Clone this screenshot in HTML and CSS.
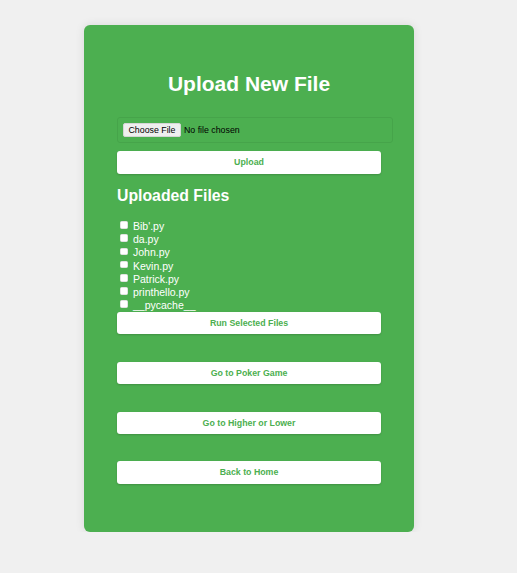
FILE: index.html
```html
<!DOCTYPE html>
<html lang="en">
<head>
<meta charset="utf-8">
<title>Upload New File</title>
<link rel="stylesheet" href="styles.css">
</head>
<body>
<div class="page">
  <div class="card">
    <h1 class="title">Upload New File</h1>
    <form class="upload-form">
      <input type="file" class="file-input">
      <button type="button" class="btn">Upload</button>
    </form>
    <h2 class="section-title">Uploaded Files</h2>
    <form class="run-form">
      <ul class="file-list">
        <li class="file-item"><input type="checkbox" class="check"><span>Bib'.py</span></li>
        <li class="file-item"><input type="checkbox" class="check"><span>da.py</span></li>
        <li class="file-item"><input type="checkbox" class="check"><span>John.py</span></li>
        <li class="file-item"><input type="checkbox" class="check"><span>Kevin.py</span></li>
        <li class="file-item"><input type="checkbox" class="check"><span>Patrick.py</span></li>
        <li class="file-item"><input type="checkbox" class="check"><span>printhello.py</span></li>
        <li class="file-item"><input type="checkbox" class="check"><span>__pycache__</span></li>
      </ul>
      <button type="button" class="btn">Run Selected Files</button>
    </form>
    <a href="#" class="btn link-btn">Go to Poker Game</a>
    <a href="#" class="btn link-btn">Go to Higher or Lower</a>
    <a href="#" class="btn link-btn">Back to Home</a>
  </div>
</div>
</body>
</html>
```
FILE: styles.css
```css
html, body {
  margin: 0;
  padding: 0;
  background: #f0f0f0;
  font-family: "Liberation Sans", Arial, sans-serif;
}

.page {
  padding: 25px 0 0 84px;
}

.card {
  width: 264px;
  padding: 33px 33px 47.5px;
  background: #4caf50;
  border-radius: 6px;
  box-shadow: 0 0 10px rgba(0, 0, 0, 0.1);
  color: #ffffff;
}

.title {
  margin: 14px 0 21px;
  font-size: 21px;
  line-height: 24px;
  font-weight: bold;
  text-align: center;
}

.upload-form {
  margin: 0;
}

.file-input {
  display: block;
  width: 264px;
  height: 14px;
  padding: 5px;
  margin: 0 0 8px;
  border: 1px solid #46a44a;
  border-radius: 3px;
  font-family: "Liberation Sans", Arial, sans-serif;
  font-size: 8.8px;
  line-height: 14px;
  color: #000;
}

.file-input::file-selector-button {
  height: 14px;
  padding: 0 4.5px;
  margin: 0 3px 0 0;
  border: 1px solid #d6d6d6;
  border-radius: 2px;
  background: #efefef;
  font-family: "Liberation Sans", Arial, sans-serif;
  font-size: 8.8px;
  color: #000;
}

.btn {
  display: block;
  box-sizing: border-box;
  width: 100%;
  height: 22.7px;
  margin: 0;
  padding: 0;
  border: none;
  border-radius: 3px;
  background: #ffffff;
  box-shadow: 0 1px 2px rgba(0, 0, 0, 0.18);
  color: #4caf50;
  font-family: "Liberation Sans", Arial, sans-serif;
  font-size: 8.8px;
  font-weight: bold;
  line-height: 22.7px;
  text-align: center;
  text-decoration: none;
  cursor: pointer;
}

.section-title {
  margin: 13.6px 0 14px;
  font-size: 15.8px;
  line-height: 18.15px;
  font-weight: bold;
}

.run-form {
  margin: 0;
}

.file-list {
  list-style: none;
  margin: 0;
  padding: 0;
}

.file-item {
  display: flex;
  align-items: center;
  height: 13.2px;
  font-size: 10.5px;
  line-height: 12px;
  white-space: nowrap;
}

.check {
  appearance: none;
  -webkit-appearance: none;
  box-sizing: border-box;
  width: 7.5px;
  height: 7.5px;
  margin: 0 5.5px 2px 3px;
  border: 1px solid #e2e2e2;
  border-radius: 1.5px;
  background: #ffffff;
  flex-shrink: 0;
}

.link-btn {
  margin-top: 27.2px;
}
```
